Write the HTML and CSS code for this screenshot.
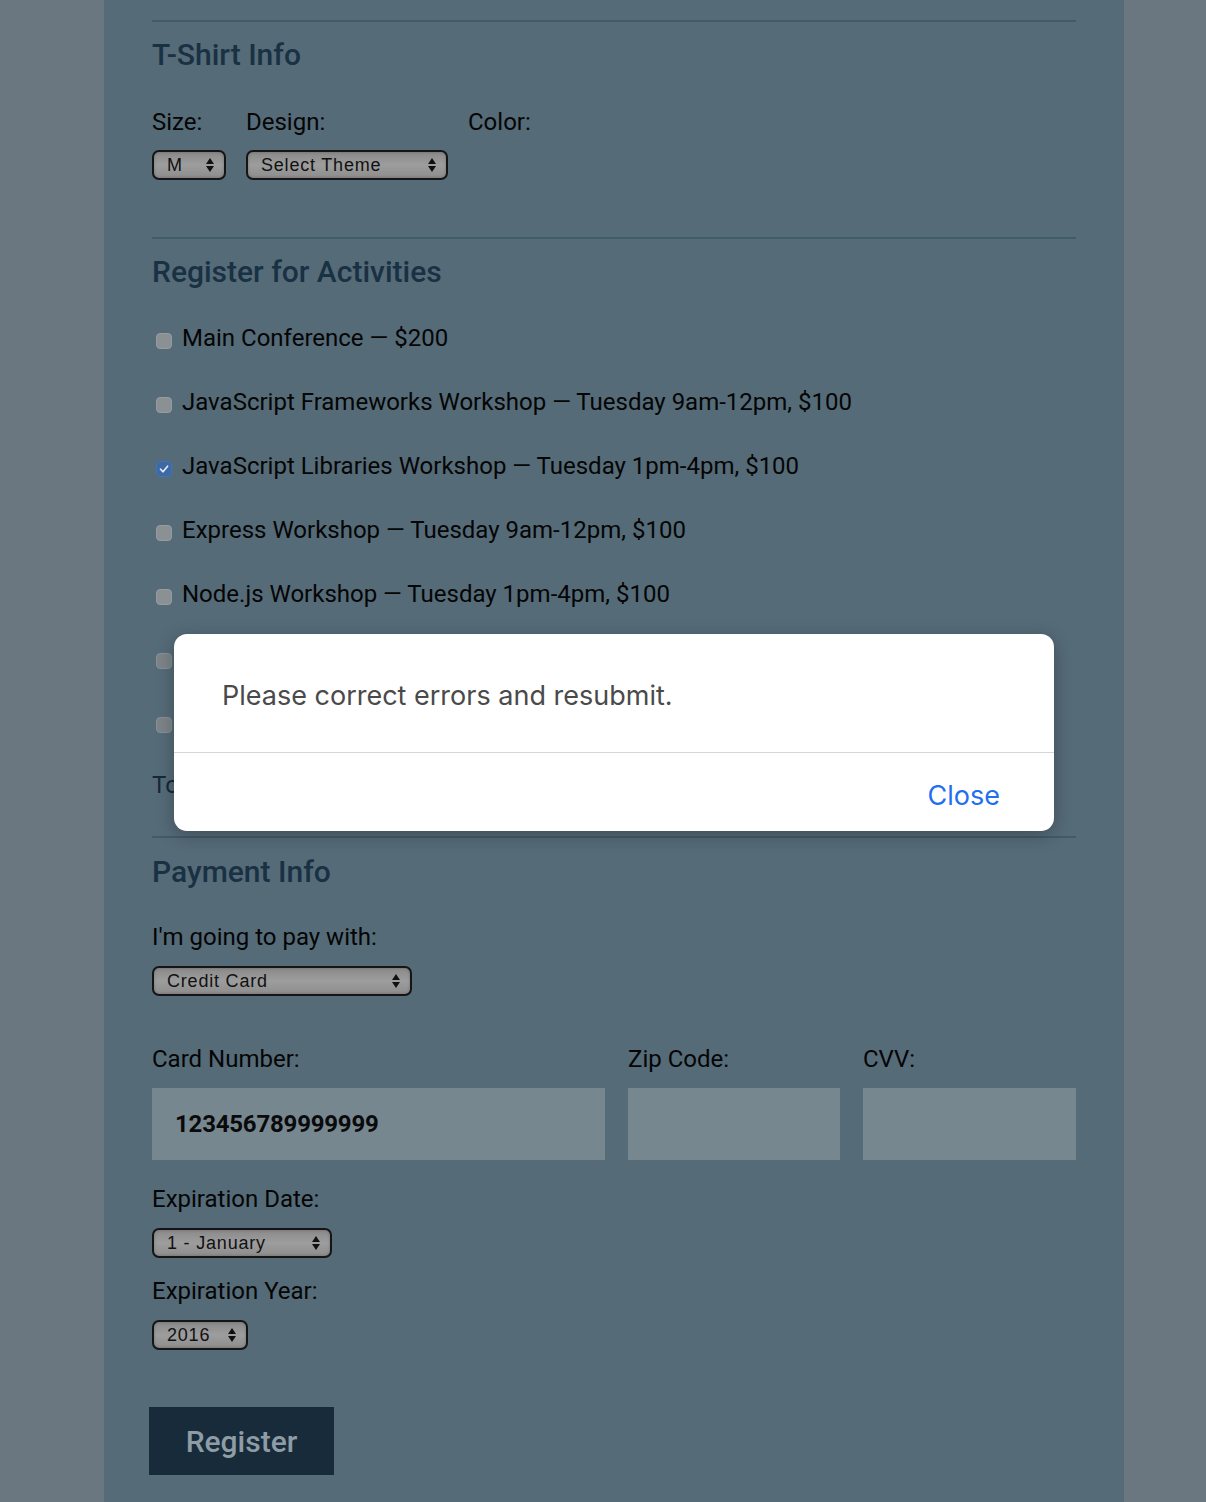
FILE: index.html
```html
<!DOCTYPE html>
<html lang="en">
<head>
<meta charset="utf-8">
<title>Register</title>
<link rel="stylesheet" href="styles.css">
</head>
<body>
<div class="container">
  <form class="form">
    <section class="fieldset">
      <h2 class="legend">T-Shirt Info</h2>
      <div class="shirt-row">
        <div class="field">
          <span class="label">Size:</span>
          <div class="select select-size"><span class="select-text">M</span><svg class="arrows" width="8" height="14" viewBox="0 0 8 14"><path d="M4 0 L8 6 L0 6 Z M0 8 L8 8 L4 14 Z" fill="#111"/></svg></div>
        </div>
        <div class="field">
          <span class="label">Design:</span>
          <div class="select select-design"><span class="select-text">Select Theme</span><svg class="arrows" width="8" height="14" viewBox="0 0 8 14"><path d="M4 0 L8 6 L0 6 Z M0 8 L8 8 L4 14 Z" fill="#111"/></svg></div>
        </div>
        <div class="field">
          <span class="label">Color:</span>
        </div>
      </div>
    </section>

    <section class="fieldset activities">
      <h2 class="legend">Register for Activities</h2>
      <ul class="checks">
        <li class="check"><span class="box"></span><span class="label">Main Conference — $200</span></li>
        <li class="check"><span class="box"></span><span class="label">JavaScript Frameworks Workshop — Tuesday 9am-12pm, $100</span></li>
        <li class="check"><span class="box box-on"><svg width="12" height="12" viewBox="0 0 12 12"><path d="M2.5 6.2 L5 8.8 L9.6 3.2" fill="none" stroke="#e8eef6" stroke-width="1.6" stroke-linecap="round" stroke-linejoin="round"/></svg></span><span class="label">JavaScript Libraries Workshop — Tuesday 1pm-4pm, $100</span></li>
        <li class="check"><span class="box"></span><span class="label">Express Workshop — Tuesday 9am-12pm, $100</span></li>
        <li class="check"><span class="box"></span><span class="label">Node.js Workshop — Tuesday 1pm-4pm, $100</span></li>
        <li class="check"><span class="box box-dim"></span></li>
        <li class="check"><span class="box box-dim"></span></li>
      </ul>
      <p class="total">Total: $100</p>
    </section>

    <section class="fieldset payment">
      <h2 class="legend">Payment Info</h2>
      <span class="label pay-label">I'm going to pay with:</span>
      <div class="select select-pay"><span class="select-text">Credit Card</span><svg class="arrows" width="8" height="14" viewBox="0 0 8 14"><path d="M4 0 L8 6 L0 6 Z M0 8 L8 8 L4 14 Z" fill="#111"/></svg></div>

      <div class="card-row">
        <div class="card-field card-number">
          <span class="label">Card Number:</span>
          <div class="input"><span class="input-text">123456789999999</span></div>
        </div>
        <div class="card-field card-zip">
          <span class="label">Zip Code:</span>
          <div class="input"></div>
        </div>
        <div class="card-field card-cvv">
          <span class="label">CVV:</span>
          <div class="input"></div>
        </div>
      </div>

      <span class="label exp-label">Expiration Date:</span>
      <div class="select select-month"><span class="select-text">1 - January</span><svg class="arrows" width="8" height="14" viewBox="0 0 8 14"><path d="M4 0 L8 6 L0 6 Z M0 8 L8 8 L4 14 Z" fill="#111"/></svg></div>
      <span class="label year-label">Expiration Year:</span>
      <div class="select select-year"><span class="select-text">2016</span><svg class="arrows" width="8" height="14" viewBox="0 0 8 14"><path d="M4 0 L8 6 L0 6 Z M0 8 L8 8 L4 14 Z" fill="#111"/></svg></div>
    </section>

    <button class="register" type="button">Register</button>
  </form>

  <div class="modal">
    <div class="modal-body"><span class="modal-text">Please correct errors and resubmit.</span></div>
    <div class="modal-footer"><span class="close">Close</span></div>
  </div>
</div>
</body>
</html>
```

FILE: styles.css
```css
html, body {
  margin: 0;
  padding: 0;
}
body {
  background: #6b7780;
  font-family: Roboto, "Liberation Sans", Arial, sans-serif;
  color: #050505;
  height: 1502px;
  overflow: hidden;
}
.container {
  position: relative;
  width: 1020px;
  margin-left: 104px;
  background: #556b78;
  padding: 20px 48px 40px;
  box-sizing: border-box;
  min-height: 1502px;
}
.form {
  display: flex;
  flex-direction: column;
  align-items: flex-start;
}
.fieldset {
  align-self: stretch;
  border-top: 2px solid #405b69;
  display: flex;
  flex-direction: column;
  align-items: flex-start;
}
.legend {
  margin: 15px 0 0;
  font-size: 30px;
  line-height: 36px;
  font-weight: 500;
  color: #193143;
}
.label {
  font-size: 24px;
  line-height: 26px;
  color: #050505;
}
.shirt-row {
  display: flex;
  gap: 20px;
  margin-top: 36px;
  height: 128px;
}
.field {
  display: flex;
  flex-direction: column;
  gap: 15px;
  align-items: flex-start;
}
.select {
  display: flex;
  align-items: center;
  justify-content: space-between;
  box-sizing: border-box;
  height: 30px;
  border: 2px solid #151515;
  border-radius: 7px;
  background: linear-gradient(#8a8a8a, #9d9d9d 50%, #8d8d8d);
  box-shadow: inset 0 0 3px rgba(0,0,0,0.25);
  padding: 0 10px 0 13px;
  font-family: "Liberation Sans", Arial, sans-serif;
  font-size: 18px;
  letter-spacing: 0.8px;
  color: #111;
}
.select-text {
  line-height: 26px;
}
.arrows {
  flex: none;
}
.select-size { width: 74px; }
.select-design { width: 202px; }
.select-pay { width: 260px; margin-top: 16px; }
.select-month { width: 180px; margin-top: 16px; }
.select-year { width: 96px; margin-top: 16px; }

.activities .legend { margin-top: 15px; }
.checks {
  list-style: none;
  margin: 35px 0 0;
  padding: 0;
  display: flex;
  flex-direction: column;
  gap: 38px;
}
.check {
  display: flex;
  align-items: flex-start;
  height: 26px;
}
.box {
  width: 16px;
  height: 16px;
  box-sizing: border-box;
  margin: 8px 10px 0 4px;
  border-radius: 4px;
  background: #8b9094;
  border: 1px solid #979b9e;
  display: flex;
  align-items: center;
  justify-content: center;
}
.box-dim {
  background: #7c8489;
  border-color: #889095;
}
.box-on {
  background: #3d69a6;
  border-color: #4672ad;
}
.total {
  margin: 37px 0 38px;
  font-size: 24px;
  line-height: 26px;
  color: #14293a;
}

.payment .legend { margin-top: 16px; }
.pay-label { margin-top: 34px; }
.card-row {
  align-self: stretch;
  display: flex;
  gap: 23px;
  margin-top: 50px;
}
.card-field {
  display: flex;
  flex-direction: column;
  gap: 16px;
}
.card-number { width: 453px; }
.card-zip { width: 212px; }
.card-cvv { width: 213px; }
.input {
  height: 72px;
  background: #778790;
  display: flex;
  align-items: center;
  padding-left: 23px;
  box-sizing: border-box;
}
.input-text {
  font-size: 24px;
  font-weight: 700;
  color: #0a0a0a;
  letter-spacing: -0.2px;
}
.exp-label { margin-top: 26px; }
.year-label { margin-top: 20px; }

.register {
  margin: 57px 0 0 -3px;
  width: 185px;
  height: 68px;
  border: none;
  background: #172b3a;
  color: #8e9ca5;
  font-family: Roboto, "Liberation Sans", Arial, sans-serif;
  font-size: 30px;
  font-weight: 500;
  padding: 0;
}

.modal {
  position: absolute;
  left: 70px;
  top: 634px;
  width: 880px;
  background: #ffffff;
  border-radius: 13px;
  box-shadow: 0 4px 18px rgba(0,0,0,0.28);
  font-family: Inter, Roboto, "Liberation Sans", sans-serif;
}
.modal-body {
  height: 119px;
  box-sizing: border-box;
  padding: 6px 48px 0;
  display: flex;
  align-items: center;
  border-bottom: 1px solid #d6d6d6;
}
.modal-text {
  font-size: 27px;
  line-height: 26px;
  color: #4a4a4a;
}
.modal-footer {
  height: 78px;
  display: flex;
  align-items: center;
  justify-content: flex-end;
  padding: 0 54px 0 0;
}
.close {
  font-size: 27px;
  color: #1f6fef;
  padding-top: 6px;
}
```
